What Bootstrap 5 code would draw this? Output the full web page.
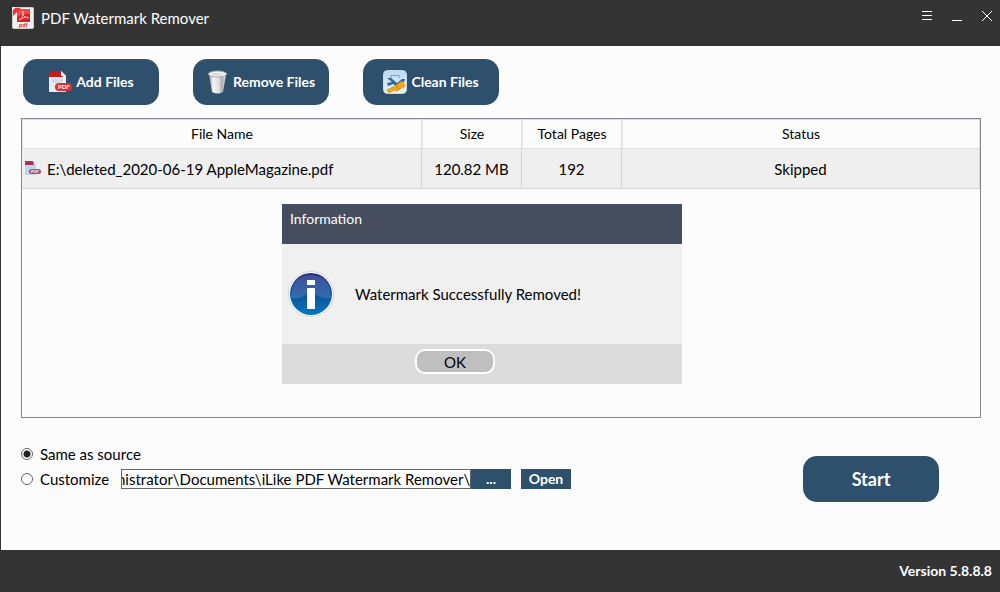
<!DOCTYPE html>
<html lang="en">
<head>
<meta charset="utf-8">
<meta name="viewport" content="width=device-width, initial-scale=1">
<title>PDF Watermark Remover</title>
<link href="https://cdn.jsdelivr.net/npm/bootstrap@5.3.0/dist/css/bootstrap.min.css" rel="stylesheet">
<style>
body{font-family:Lato,"Liberation Sans",sans-serif;font-size:15px;line-height:20px;color:#000;background:#fcfcfc;border-left:1px solid #333}
svg{display:block;flex:none}
.app-bar{background:#343434;color:#fff;height:46px;padding:7px 4px 0 11px}
.app-title{margin-left:7px}
.win-set{gap:12px}
.win-btn{background:none;border:0;padding:0;width:18px;height:18px;color:#fff}
.blue-btn{--bs-btn-color:#fff;--bs-btn-bg:#2f506c;--bs-btn-hover-color:#fff;--bs-btn-hover-bg:#3a607f;--bs-btn-border-width:0;font-weight:700;line-height:20px}
.big-btn{width:136px;height:46px;border-radius:14px;font-size:14px;padding:0;gap:4px}
.start-btn{font-size:18px;margin:15px 41px 0 0}
.tool-row{padding:13px 22px;gap:34px}
.file-box{margin:0 19px 0 20px;height:300px;border:1px solid #828790}
.file-table{table-layout:fixed;width:100%;border-collapse:separate;border-spacing:0;text-align:center}
.file-table th{font-weight:400;font-size:14px;height:30px;padding:0;border:1px solid #dfdfdf;border-left-color:#e8e8e8}
.file-table td{height:40px;padding:0;background:#efefef;border-right:1px solid #d5d5d5;border-bottom:1px solid #d5d5d5}
.file-table th:first-child{width:400px}
.file-table .narrow{width:100px}
.file-cell{gap:6px;padding-left:3px}
.info-box{top:85px;left:260px;width:400px;background:#f0f0f0}
.info-head{background:#464e5e;color:#fff;height:40px;padding:5px 8px;font-size:14px}
.info-body{height:100px;padding:0 6px;gap:21px}
.info-foot{height:40px;background:#dcdcdc;padding:5px 133px}
.ok-btn{width:80px;height:25px;padding:0;background:#bfbfbf;border:2px solid #fff;border-radius:10px;line-height:20px}
.dest{padding:23px 20px 0}
.pick{flex:none;width:12px;height:12px;margin:0;appearance:none;border:1px solid #666;border-radius:50%;background:#fff}
.pick:checked{background:radial-gradient(circle,#222 0 3px,#fff 4px)}
.pick-row{height:25px;gap:7px}
.custom-label{width:74px}
.path-field{width:350px;height:20px;border:1px solid #666;border-radius:0;padding:0;font-size:15px;line-height:18px;background:#fff;color:#000}
.small-btn{height:20px;border-radius:0;padding:0;font-size:14px}
.browse{width:40px}
.open-btn{width:50px;margin-left:3px}
.foot-bar{background:#343434;color:#fff;height:42px;padding:0 8px;font-weight:700;font-size:14px}
</style>
</head>
<body class="d-flex flex-column min-vh-100">
<header class="app-bar d-flex justify-content-between align-items-start">
  <div class="d-flex align-items-center">
    <svg width="22" height="22" viewBox="0 0 22 22"><rect x=".5" y=".5" width="21" height="21" rx="1" fill="#f4f2f1" stroke="#ccc"/><path d="M5 2H18V15H5Z" fill="#d91f26"/><path d="M5 2H18V7Q11 6 5 10Z" fill="#ee4a48"/><path d="M7 13C10 11 12 8 11 4C9 4 11 11 16 11C19 10 13 9 7 13Z" fill="none" stroke="#fbb" stroke-width=".9"/><path d="M1 1H9L1 9Z" fill="#e33"/><path d="M0 0H4L0 4Z" fill="#eee"/><text x="7" y="20" font-size="6" font-weight="700" font-style="italic" fill="#d22">pdf</text></svg>
    <span class="app-title">PDF Watermark Remover</span>
  </div>
  <div class="win-set d-flex">
    <button class="win-btn" aria-label="Menu"><svg width="18" height="18" stroke="#fff"><path d="M4 4.500H14M4 8.500H14M4 12.500H14"/></svg></button>
    <button class="win-btn" aria-label="Minimize"><svg width="18" height="18" stroke="#fff"><path d="M4 13.500H14"/></svg></button>
    <button class="win-btn" aria-label="Close"><svg width="18" height="18" stroke="#fff"><path d="M4 4L14 14M14 4L4 14"/></svg></button>
  </div>
</header>
<main class="flex-grow-1">
  <div class="tool-row d-flex">
    <button class="btn blue-btn big-btn d-flex align-items-center justify-content-center">
      <svg width="24" height="24" viewBox="0 0 24 24"><path d="M1 1H13L18 6V22H1Z" fill="#e9edf0"/><path d="M1 1H13L15 7H1Z" fill="#c9181e"/><path d="M13 1L18 6H13Z" fill="#fff"/><path d="M4 10H15M4 12H14" stroke="#c5cbd2"/><rect x="7" y="13" width="17" height="8" rx="4" fill="#e22f27"/><text x="10" y="19" font-size="6" font-weight="700" fill="#fff">PDF</text></svg>
      Add Files</button>
    <button class="btn blue-btn big-btn d-flex align-items-center justify-content-center">
      <svg width="22" height="24" viewBox="0 0 22 24"><defs><linearGradient id="can"><stop stop-color="#999"/><stop offset=".25" stop-color="#f5f5f5"/><stop offset=".6" stop-color="#ddd"/><stop offset=".75" stop-color="#aaa"/><stop offset="1" stop-color="#eee"/></linearGradient></defs><path d="M2 4L5 22Q11 25 16 22L19 4Z" fill="url(#can)"/><ellipse cx="10.500" cy="4" rx="9" ry="3" fill="#f4f4f4" stroke="#aaa"/><path d="M4 4Q7 2 10 3T17 4Q11 7 4 4Z" fill="#d5d8da"/></svg>
      Remove Files</button>
    <button class="btn blue-btn big-btn d-flex align-items-center justify-content-center">
      <svg width="24" height="24" viewBox="0 0 24 24"><defs><linearGradient id="pane" x2="0" y2="1"><stop stop-color="#b8dafa"/><stop offset="1" stop-color="#f0f0f0"/></linearGradient></defs><rect x=".5" y=".5" width="23" height="23" rx="4" fill="url(#pane)" stroke="#cdd9e4"/><path d="M8 8V5.500H16V8" fill="none" stroke="#8aa3bb" stroke-width="1.200"/><path d="M4 8L8 8L14 13L19 9L22 9L21 12L14 16L10 14L5 16L4 13L9 12Z" fill="#2e6698"/><path d="M4 20L10 17L19 11L22 16L14 21L11 20L6 23Z" fill="#f4a916" stroke="#d18a0c" stroke-width=".7"/><path d="M13 15L16 20" stroke="#c9830a"/></svg>
      Clean Files</button>
  </div>
  <section class="file-box position-relative">
    <table class="file-table">
      <thead><tr><th>File Name</th><th class="narrow">Size</th><th class="narrow">Total Pages</th><th>Status</th></tr></thead>
      <tbody><tr>
        <td><div class="file-cell d-flex align-items-center"><svg width="16" height="15" viewBox="0 0 16 15"><path d="M0 0H8L11 4V14H0Z" fill="#b9d5ef"/><path d="M0 0H8L9 4H0Z" fill="#a3365a"/><rect x="4" y="8" width="12" height="5" rx="2.500" fill="#b74b67"/><text x="6" y="12" font-size="4" font-weight="700" fill="#fff">PDF</text></svg><span class="text-nowrap">E:\deleted_2020-06-19 AppleMagazine.pdf</span></div></td>
        <td>120.82 MB</td><td>192</td><td>Skipped</td></tr></tbody>
    </table>
    <div class="info-box position-absolute" role="dialog" aria-label="Information">
      <div class="info-head">Information</div>
      <div class="info-body d-flex align-items-center">
        <svg width="46" height="46" viewBox="0 0 46 46"><defs><linearGradient id="orb" x2="0" y2="1"><stop stop-color="#2b2d84"/><stop offset=".5" stop-color="#0d519b"/><stop offset="1" stop-color="#0877bd"/></linearGradient></defs><circle cx="23" cy="23" r="22.500" fill="#fff" stroke="#d5d5d5"/><circle cx="23" cy="23" r="21" fill="url(#orb)"/><path d="M3 27Q3 5 23 4Q43 5 43 27Q33 29 23 20Q13 29 3 27Z" fill="#fff" opacity=".14"/><path d="M19 9H27V14H19ZM19 17H27V38H19Z" fill="#fff"/></svg>
        <span>Watermark Successfully Removed!</span>
      </div>
      <div class="info-foot"><button class="ok-btn d-block">OK</button></div>
    </div>
  </section>
  <div class="dest d-flex justify-content-between align-items-start">
    <div>
      <div class="pick-row d-flex align-items-center"><input class="pick" type="radio" name="dest" id="same" checked><label for="same">Same as source</label></div>
      <div class="pick-row d-flex align-items-center"><input class="pick" type="radio" name="dest" id="custom"><label class="custom-label" for="custom">Customize</label>
        <div class="d-flex"><input class="path-field" id="path" type="text" aria-label="Output folder" value="nistrator\Documents\iLike PDF Watermark Remover\"><button class="btn blue-btn small-btn browse">...</button></div>
        <button class="btn blue-btn small-btn open-btn">Open</button>
      </div>
    </div>
    <button class="btn blue-btn big-btn start-btn">Start</button>
  </div>
</main>
<footer class="foot-bar d-flex align-items-center justify-content-end">Version 5.8.8.8</footer>
<script src="https://cdn.jsdelivr.net/npm/bootstrap@5.3.0/dist/js/bootstrap.bundle.min.js"></script>
<script>
// Keep the end of a long folder path in view.
const path = document.getElementById('path');
path.scrollLeft = path.scrollWidth;
</script>
</body>
</html>
